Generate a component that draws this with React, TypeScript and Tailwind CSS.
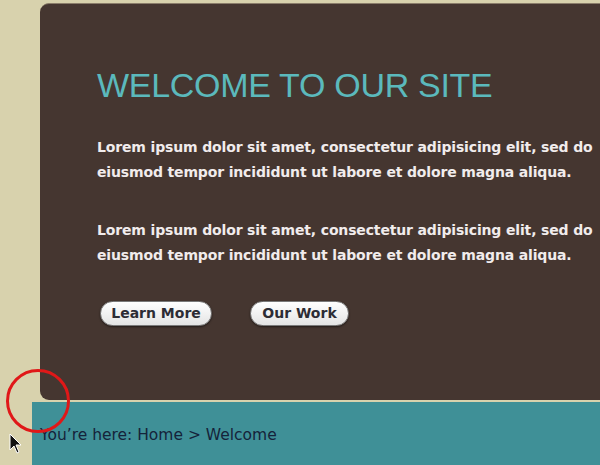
export default function App() {
  return (
    <div className="relative flex h-[465px] w-[600px] flex-col overflow-hidden bg-[#d8d2ad] pt-[3px] font-['Liberation_Sans',Arial,sans-serif]">
      <div className="ml-[40px] h-[397px] shrink-0 rounded-l-[9px] border-t border-[#8a7d6a] bg-[#453630] pl-[57px] pt-[61px]">
        <h1 className="whitespace-nowrap text-[34px] leading-[40px] tracking-[-0.3px] text-[#5bb9bc]">
          WELCOME TO OUR SITE
        </h1>
        <div className="font-['DejaVu_Sans',sans-serif] text-[14px] font-bold leading-[25px] tracking-[-0.15px] text-[#f1ecec]">
          <p className="mt-[30px] whitespace-nowrap">
            Lorem ipsum dolor sit amet, consectetur adipisicing elit, sed do
            <br />
            eiusmod tempor incididunt ut labore et dolore magna aliqua.
          </p>
          <p className="mt-[33px] whitespace-nowrap">
            Lorem ipsum dolor sit amet, consectetur adipisicing elit, sed do
            <br />
            eiusmod tempor incididunt ut labore et dolore magna aliqua.
          </p>
        </div>
        <div className="mt-[33px] flex gap-[38px] pl-[3px] font-['DejaVu_Sans',sans-serif]">
          <button className="h-[25px] w-[112px] rounded-full border border-[#7a7a7a] bg-gradient-to-b from-white to-[#e4e4e4] text-[14px] font-bold text-[#2c2c34] shadow-[0_1px_2px_rgba(0,0,0,0.5)]">
            Learn More
          </button>
          <button className="h-[25px] w-[99px] rounded-full border border-[#7a7a7a] bg-gradient-to-b from-white to-[#e4e4e4] text-[14px] font-bold text-[#2c2c34] shadow-[0_1px_2px_rgba(0,0,0,0.5)]">
            Our Work
          </button>
        </div>
      </div>
      <div className="ml-[32px] mt-[2px] flex-1 bg-[#3f9097] pl-[8px] pt-[24px]">
        <p className="whitespace-nowrap font-['DejaVu_Sans',sans-serif] text-[15.5px] leading-[18px] text-[#15233a]">
          You’re here: Home &gt; Welcome
        </p>
      </div>

      <div className="absolute left-[6px] top-[369px] h-[64px] w-[64px] rounded-full border-[3px] border-[#e01818]" />
      <svg className="absolute left-[9px] top-[433px]" width="14" height="22" viewBox="0 0 14 22">
        <path d="M1 1 L1 17 L5 13 L8 20 L10 19 L7 12 L12 12 Z" fill="#111" stroke="#fff" strokeWidth="1" />
      </svg>
    </div>
  );
}
